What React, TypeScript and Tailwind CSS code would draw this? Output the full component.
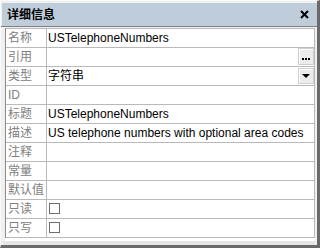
import React from 'react';

const font = { fontFamily: '"Liberation Sans", "Noto Sans CJK SC", sans-serif' };

type Row = { label: string; value?: string; kind?: 'text' | 'ellipsis' | 'combo' | 'check' };

const rows: Row[] = [
  { label: '名称', value: 'USTelephoneNumbers' },
  { label: '引用', kind: 'ellipsis' },
  { label: '类型', value: '字符串', kind: 'combo' },
  { label: 'ID' },
  { label: '标题', value: 'USTelephoneNumbers' },
  { label: '描述', value: 'US telephone numbers with optional area codes' },
  { label: '注释' },
  { label: '常量' },
  { label: '默认值' },
  { label: '只读', kind: 'check' },
  { label: '只写', kind: 'check' },
];

// small grey button used by the "..." and dropdown cells
const CellButton: React.FC<{ children: React.ReactNode; tall?: boolean }> = ({ children, tall }) => (
  <div
    className={`w-[16px] ${tall ? 'h-[17px]' : 'h-[16px] mt-[1px]'} shrink-0 bg-[#ececec] border border-[#cfcfcf] shadow-[inset_1px_1px_0_#ffffff] flex items-center justify-center`}
  >
    {children}
  </div>
);

const PropertyRow: React.FC<{ row: Row }> = ({ row }) => (
  <div className="flex h-[19px] border-b border-[#b9b9b9]">
    <div className="w-[41px] shrink-0 border-r border-[#b9b9b9] pl-[2px] text-[12px] leading-[18px] text-[#808080] whitespace-nowrap">
      {row.label}
    </div>
    <div className="flex-1 flex items-start min-w-0">
      <div className="flex-1 pl-[1px] text-[12px] leading-[18px] text-black whitespace-nowrap overflow-hidden">
        {row.kind === 'check' ? (
          <div className="w-[11px] h-[11px] border border-[#6e6e6e] bg-white mt-[3px] ml-[1px]" />
        ) : (
          row.value
        )}
      </div>
      {row.kind === 'ellipsis' && (
        <CellButton tall>
          <svg width="8" height="2" viewBox="0 0 8 2" className="mt-[4px]">
            <rect x="0" y="0" width="2" height="2" fill="#000" />
            <rect x="3" y="0" width="2" height="2" fill="#000" />
            <rect x="6" y="0" width="2" height="2" fill="#000" />
          </svg>
        </CellButton>
      )}
      {row.kind === 'combo' && (
        <CellButton>
          <svg width="8" height="4" viewBox="0 0 8 4">
            <path d="M0 0 H8 L4 4 Z" fill="#000" />
          </svg>
        </CellButton>
      )}
    </div>
  </div>
);

export default function App() {
  return (
    <div
      className="w-[320px] h-[248px] bg-[#f0f0f0] border-t border-l border-[#f9f9f9] border-r-[3px] border-b-[3px] border-r-[#6a6a6a] border-b-[#6a6a6a] flex flex-col"
      style={font}
    >
      {/* title bar */}
      <div className="mt-[2px] ml-[1px] h-[23px] bg-[#bfcddb] flex items-center justify-between pl-[5px] pr-[8px]">
        <span className="text-[12px] font-bold text-black leading-none">详细信息</span>
        <svg width="9" height="9" viewBox="0 0 9 9">
          <path d="M1 1 L8 8 M8 1 L1 8" stroke="#000" strokeWidth="2" />
        </svg>
      </div>
      <div className="h-[1px] bg-[#808080]" />
      <div className="h-[1px]" />
      {/* property grid */}
      <div className="ml-[4px] mr-[2px] bg-white pb-[3px]">
        <div className="border-t border-l border-r border-[#b9b9b9] border-l-[#8a8a8a]">
          {rows.map((r) => (
            <PropertyRow key={r.label} row={r} />
          ))}
        </div>
      </div>
      <div className="flex-1 bg-[#e6e6e6] mx-[2px]" />
    </div>
  );
}
